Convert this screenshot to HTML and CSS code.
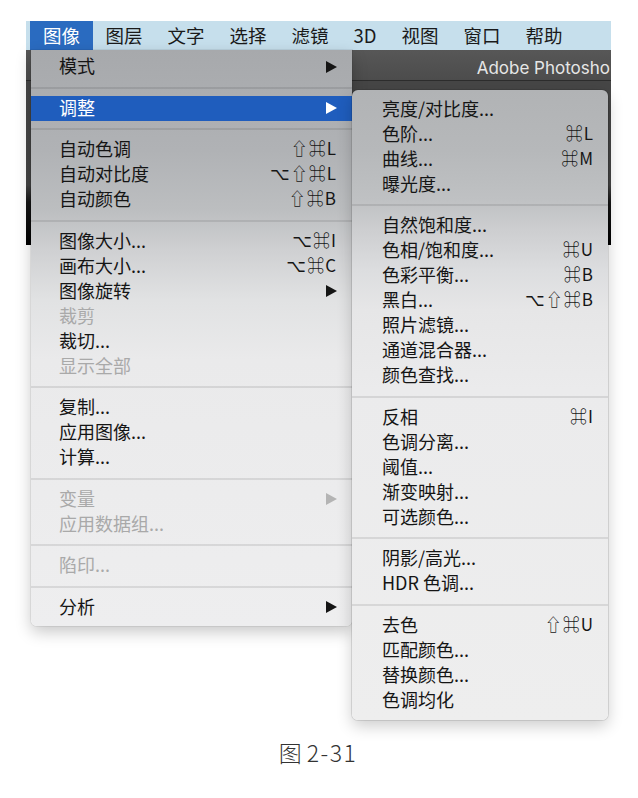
FILE: index.html
```html
<!DOCTYPE html>
<html lang="zh-CN">
<head>
    <meta charset="UTF-8">
    <title>图像 - 调整 菜单</title>
    <link rel="stylesheet" href="styles.css">
</head>
<body>
    <div class="shot">
        <nav class="menubar">
            <span class="bar-item active">图像</span>
            <span class="bar-item">图层</span>
            <span class="bar-item">文字</span>
            <span class="bar-item">选择</span>
            <span class="bar-item">滤镜</span>
            <span class="bar-item">3D</span>
            <span class="bar-item">视图</span>
            <span class="bar-item">窗口</span>
            <span class="bar-item">帮助</span>
        </nav>

        <div class="ps-window">
            <div class="ps-title">Adobe Photosho</div>
        </div>

        <!-- 图像 menu -->
        <ul class="menu main-menu">
            <li class="item"><span>模式</span><i class="arrow"></i></li>
            <li class="sep"></li>
            <li class="item selected"><span>调整</span><i class="arrow"></i></li>
            <li class="sep"></li>
            <li class="item"><span>自动色调</span><span class="keys">⇧⌘L</span></li>
            <li class="item"><span>自动对比度</span><span class="keys">⌥⇧⌘L</span></li>
            <li class="item"><span>自动颜色</span><span class="keys">⇧⌘B</span></li>
            <li class="sep"></li>
            <li class="item"><span>图像大小...</span><span class="keys">⌥⌘I</span></li>
            <li class="item"><span>画布大小...</span><span class="keys">⌥⌘C</span></li>
            <li class="item"><span>图像旋转</span><i class="arrow"></i></li>
            <li class="item disabled"><span>裁剪</span></li>
            <li class="item"><span>裁切...</span></li>
            <li class="item disabled"><span>显示全部</span></li>
            <li class="sep"></li>
            <li class="item"><span>复制...</span></li>
            <li class="item"><span>应用图像...</span></li>
            <li class="item"><span>计算...</span></li>
            <li class="sep"></li>
            <li class="item disabled"><span>变量</span><i class="arrow"></i></li>
            <li class="item disabled"><span>应用数据组...</span></li>
            <li class="sep"></li>
            <li class="item disabled"><span>陷印...</span></li>
            <li class="sep"></li>
            <li class="item"><span>分析</span><i class="arrow"></i></li>
        </ul>

        <!-- 调整 submenu -->
        <ul class="menu sub-menu">
            <li class="item"><span>亮度/对比度...</span></li>
            <li class="item"><span>色阶...</span><span class="keys">⌘L</span></li>
            <li class="item"><span>曲线...</span><span class="keys">⌘M</span></li>
            <li class="item"><span>曝光度...</span></li>
            <li class="sep"></li>
            <li class="item"><span>自然饱和度...</span></li>
            <li class="item"><span>色相/饱和度...</span><span class="keys">⌘U</span></li>
            <li class="item"><span>色彩平衡...</span><span class="keys">⌘B</span></li>
            <li class="item"><span>黑白...</span><span class="keys">⌥⇧⌘B</span></li>
            <li class="item"><span>照片滤镜...</span></li>
            <li class="item"><span>通道混合器...</span></li>
            <li class="item"><span>颜色查找...</span></li>
            <li class="sep"></li>
            <li class="item"><span>反相</span><span class="keys">⌘I</span></li>
            <li class="item"><span>色调分离...</span></li>
            <li class="item"><span>阈值...</span></li>
            <li class="item"><span>渐变映射...</span></li>
            <li class="item"><span>可选颜色...</span></li>
            <li class="sep"></li>
            <li class="item"><span>阴影/高光...</span></li>
            <li class="item"><span>HDR 色调...</span></li>
            <li class="sep"></li>
            <li class="item"><span>去色</span><span class="keys">⇧⌘U</span></li>
            <li class="item"><span>匹配颜色...</span></li>
            <li class="item"><span>替换颜色...</span></li>
            <li class="item"><span>色调均化</span></li>
        </ul>
    </div>

    <p class="caption">图 <span class="fig-num">2-31</span></p>
</body>
</html>
```

FILE: styles.css
```css
* {
    margin: 0;
    padding: 0;
    box-sizing: border-box;
}

body {
    background: #ffffff;
    color: #151515;
    font-family: "Noto Sans CJK SC", "Noto Sans", "DejaVu Sans", sans-serif;
}

.shot {
    position: relative;
    width: 585px;
    height: 702px;
    margin: 21px 0 0 26px;
}

/* top menu bar */
.menubar {
    display: flex;
    height: 29px;
    padding-left: 4px;
    background: #c6dfec;
    font-size: 18.5px;
    line-height: 29px;
}

.bar-item {
    padding: 0 12.5px;
    color: #1a1a1a;
}

.bar-item.active {
    padding: 0 13px;
    background: #2a6bc0;
    color: #ffffff;
}

/* dark photoshop window behind the menus */
.ps-window {
    height: 195px;
    background: linear-gradient(#474747 0, #434343 135px, #161616 152px, #000000 195px);
}

.ps-title {
    height: 31px;
    padding-right: 1px;
    text-align: right;
    white-space: nowrap;
    background: linear-gradient(#575757, #4c4c4c);
    border-bottom: 1px solid #2c2c2c;
    color: #e6e6e6;
    font-family: Inter, "Liberation Sans", sans-serif;
    font-size: 17px;
    line-height: 36px;
}

/* menus */
.menu {
    position: absolute;
    list-style: none;
    font-size: 18px;
}

.main-menu {
    left: 5px;
    top: 29px;
    width: 321px;
    padding: 4px 0 6.5px;
    border-radius: 0 0 6px 6px;
    background: linear-gradient(#a7a9ac 0, #b0b2b5 100px, #bcbec0 160px, #cfd0d2 200px,
                #e1e2e3 250px, #eaeaeb 310px, #eeeeef 576px);
    box-shadow: 0 6px 16px rgba(0, 0, 0, 0.22),
                0 0 0 1px rgba(0, 0, 0, 0.06);
}

.sub-menu {
    left: 326px;
    top: 69px;
    width: 256px;
    padding: 6.5px 0 7.5px;
    border-radius: 6px;
    background: linear-gradient(#b1b3b5 0, #b6b8ba 60px, #bfc1c3 110px, #cdced0 140px,
                #dcdddf 180px, #e6e6e7 220px, #ebebec 300px, #eeeeee 630px);
    box-shadow: 0 6px 16px rgba(0, 0, 0, 0.2),
                0 0 0 1px rgba(0, 0, 0, 0.1);
    z-index: 2;
}

.item {
    display: flex;
    justify-content: space-between;
    align-items: center;
    height: 25px;
    line-height: 22px;
    padding: 0 15px 3px 28px;
    white-space: nowrap;
}

.sub-menu .item {
    padding: 0 14px 3px 30px;
}

.item.selected {
    background: #1f5dbd;
    color: #ffffff;
}

.item.disabled {
    color: #a9a9a9;
}

.sep {
    height: 2px;
    margin: 7.5px 0 7px;
    background: rgba(0, 0, 0, 0.09);
}

.keys {
    font-size: 17px;
    letter-spacing: 1px;
}

.arrow {
    width: 0;
    height: 0;
    margin-top: 3px;
    border-left: 11px solid currentColor;
    border-top: 6.5px solid transparent;
    border-bottom: 6.5px solid transparent;
}

.item.disabled .arrow {
    border-left-color: #b4b4b4;
}

.caption {
    margin-top: 14px;
    padding-right: 2px;
    text-align: center;
    color: #333333;
    font-size: 23px;
    font-weight: 300;
    line-height: 30px;
}

.fig-num {
    letter-spacing: 1.5px;
}
```
